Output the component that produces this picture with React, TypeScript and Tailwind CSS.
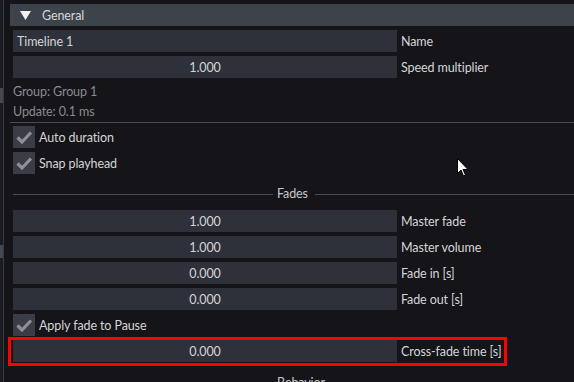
import React from "react";

function Check() {
  return (
    <div className="w-[22px] h-[22px] bg-[#3a3d45] flex items-center justify-center shrink-0">
      <svg width="22" height="22" viewBox="0 0 22 22">
        <path d="M4.5 11.5 L9 16 L18 6.5" fill="none" stroke="#8f9095" strokeWidth="3.2" strokeLinejoin="miter" />
      </svg>
    </div>
  );
}

function Field({ value, label, left }: { value: string; label: string; left?: boolean }) {
  return (
    <div className="flex items-center h-[22px] gap-[4px] shrink-0">
      <div
        className={
          "w-[384px] h-[22px] bg-[#2e3139] flex items-center pt-[1px] text-[#d4d4d6] " +
          (left ? "justify-start pl-[4px]" : "justify-center")
        }
      >
        {value}
      </div>
      <div className="pt-[1px] text-[#d4d4d6]">{label}</div>
    </div>
  );
}

function CheckRow({ label }: { label: string }) {
  return (
    <div className="flex items-center h-[22px] gap-[4px] shrink-0">
      <Check />
      <div className="pt-[1px] text-[#d4d4d6]">{label}</div>
    </div>
  );
}

function SectionSep({ title }: { title: string }) {
  return (
    <div className="flex items-center h-[22px]">
      <div className="w-[260px] h-px bg-[#4a4b50]" />
      <div className="pl-[4px] pr-[7px] text-[#c8c8cc]">{title}</div>
      <div className="flex-1 h-px bg-[#4a4b50]" />
    </div>
  );
}

export default function App() {
  return (
    <div className="w-[574px] h-[382px] overflow-hidden bg-[#141419] flex items-start relative text-[12.5px] leading-[18px] tracking-[-0.1px] font-['Lato',sans-serif]">
      <div className="w-[3px] h-[382px] bg-[#1b1c21] flex flex-col shrink-0">
        <div className="h-[88px]" />
        <div className="h-[15px] bg-[#434951]" />
        <div className="h-[142px]" />
        <div className="h-[13px] bg-[#434951]" />
      </div>
      <div className="w-px h-[382px] bg-[#393a3f] shrink-0" />
      <div className="flex-1 flex flex-col pt-[4px] pl-[6px]">
        <div className="h-[22px] bg-[#3d434b] flex items-center shrink-0">
          <svg width="11" height="9" viewBox="0 0 11 9" className="ml-[10px]">
            <path d="M0 0 L11 0 L5.5 9 Z" fill="#f2f2f2" />
          </svg>
          <span className="ml-[11px] pt-[1px] text-[#d6d6d8]">General</span>
        </div>
        <div className="pl-[3px] flex flex-col">
          <div className="mt-[4px] flex flex-col gap-[4px]">
            <Field value="Timeline 1" label="Name" left />
            <Field value="1.000" label="Speed multiplier" />
          </div>
          <div className="mt-[4px] h-[18px] flex items-center pt-[1px] text-[#8b8b90]">Group: Group 1</div>
          <div className="mt-[2px] h-[18px] flex items-center pt-[1px] text-[#8b8b90]">Update: 0.1 ms</div>
        </div>
        <div className="mt-[2px] h-px bg-[#4a4b50] shrink-0" />
        <div className="pl-[3px] flex flex-col">
          <div className="mt-[3px] flex flex-col gap-[4px]">
            <CheckRow label="Auto duration" />
            <CheckRow label="Snap playhead" />
          </div>
          <div className="mt-[9px]">
            <SectionSep title="Fades" />
          </div>
          <div className="mt-[5px] flex flex-col gap-[4px]">
            <Field value="1.000" label="Master fade" />
            <Field value="1.000" label="Master volume" />
            <Field value="0.000" label="Fade in [s]" />
            <Field value="0.000" label="Fade out [s]" />
            <CheckRow label="Apply fade to Pause" />
            <div className="relative">
              <Field value="0.000" label="Cross-fade time [s]" />
              <div className="absolute left-[-5px] top-[-3px] w-[499px] h-[29px] border-[3px] border-[#ff0000] pointer-events-none" />
            </div>
          </div>
          <div className="mt-[10px]">
            <SectionSep title="Behavior" />
          </div>
        </div>
      </div>
      <svg
        className="absolute left-[457px] top-[158px]"
        width="12"
        height="20"
        viewBox="0 0 12 20"
      >
        <path d="M0.5 0.5 L0.5 15.5 L4 12 L6.5 18 L8.5 17 L6 11.5 L11 11.5 Z" fill="#ffffff" stroke="#000000" strokeWidth="1" />
      </svg>
    </div>
  );
}
